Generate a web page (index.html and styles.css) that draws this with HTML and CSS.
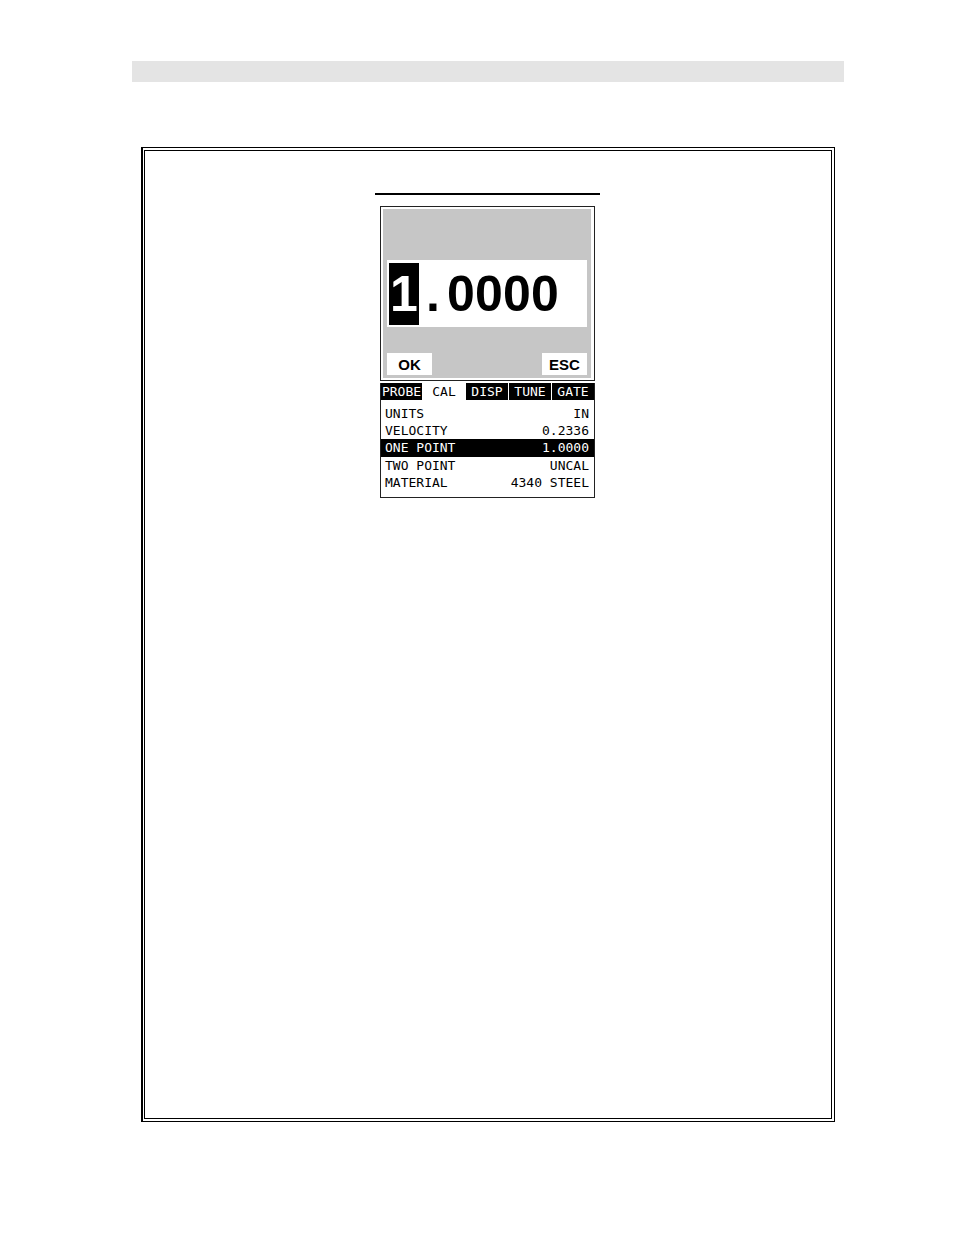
FILE: index.html
```html
<!DOCTYPE html>
<html lang="en">
<head>
  <meta charset="UTF-8" />
  <meta name="viewport" content="width=device-width, initial-scale=1.0" />
  <title>One Point Calibration</title>
  <link rel="stylesheet" href="styles.css">
</head>
<body>

  <header class="page-bar"></header>

  <main class="frame">
    <div class="frame-inner">
      <hr class="title-rule">

      <section class="device">
        <div class="editor">
          <div class="screen">
            <div class="value"><span class="digit cursor">1</span><span class="digit">.</span><span class="digit">0</span><span class="digit">0</span><span class="digit">0</span><span class="digit">0</span></div>
            <div class="actions">
              <button type="button" class="key">OK</button>
              <button type="button" class="key">ESC</button>
            </div>
          </div>
        </div>

        <div class="menu">
          <nav class="tabs">
            <button type="button" class="tab">PROBE</button>
            <button type="button" class="tab active">CAL</button>
            <button type="button" class="tab">DISP</button>
            <button type="button" class="tab divided">TUNE</button>
            <button type="button" class="tab divided">GATE</button>
          </nav>
          <table class="settings">
            <tr><th scope="row">UNITS</th><td>IN</td></tr>
            <tr><th scope="row">VELOCITY</th><td>0.2336</td></tr>
            <tr class="selected"><th scope="row">ONE POINT</th><td>1.0000</td></tr>
            <tr><th scope="row">TWO POINT</th><td>UNCAL</td></tr>
            <tr><th scope="row">MATERIAL</th><td>4340 STEEL</td></tr>
          </table>
        </div>
      </section>
    </div>
  </main>

</body>
</html>
```
FILE: styles.css
```css
:root {
  --bar: #e4e4e4;
  --screen: #c6c6c6;
  --ink: #000;
  --edge: #222;
}

* {
  box-sizing: border-box;
}

body {
  margin: 0;
  min-height: 100vh;
  display: flex;
  flex-direction: column;
  padding: 61px 110px 113px 132px;
  background: #fff;
  color: var(--ink);
  font-family: "Liberation Sans", sans-serif;
}

.page-bar {
  height: 21px;
  background: var(--bar);
}

/* Double rule, heavier on the left */
.frame {
  flex: 1;
  display: flex;
  margin: 65px 9px 0;
  padding: 2px 2px 2px 1px;
  border: 1px solid var(--ink);
  border-left-width: 2px;
}

.frame-inner {
  flex: 1;
  display: flex;
  flex-direction: column;
  align-items: center;
  padding: 42px 1px 0 0;
  border: 1px solid var(--ink);
}

.title-rule {
  width: 225px;
  height: 2px;
  margin: 0 0 11px;
  border: 0;
  background: var(--ink);
}

.device {
  width: 215px;
}

.editor {
  padding: 2px 3px 2px 2px;
  border: 1px solid var(--edge);
}

.screen {
  height: 169px;
  padding: 51px 4px 4px;
  background: var(--screen);
}

.value {
  display: flex;
  align-items: center;
  height: 67px;
  padding-left: 2px;
  background: #fff;
  font-size: 50px;
  font-weight: bold;
  line-height: 62px;
}

.digit {
  width: 28px;
  text-align: center;
}

.cursor {
  width: 30px;
  background: var(--ink);
  color: #fff;
}

.actions {
  display: flex;
  justify-content: space-between;
  margin-top: 26px;
}

.key {
  width: 45px;
  height: 22px;
  padding: 0;
  border: 0;
  background: #fff;
  color: var(--ink);
  font: bold 15px "Liberation Sans", sans-serif;
}

.menu {
  margin-top: 2px;
  padding-bottom: 6px;
  border: 1px solid var(--edge);
  border-top: 0;
  font: 13px "DejaVu Sans Mono", monospace;
}

.tabs {
  display: grid;
  grid-template-columns: 41fr 44fr 42fr 43fr 43fr;
  height: 17px;
}

.tab {
  padding: 0;
  border: 0;
  background: var(--ink);
  color: #fff;
  font: inherit;
  line-height: 17px;
}

.tab.active {
  background: #fff;
  color: var(--ink);
}

.tab.divided {
  border-left: 1px solid #fff;
}

.settings {
  width: 100%;
  margin-top: 5px;
  border-collapse: collapse;
  line-height: 17px;
}

.settings th {
  padding: 0 0 0 4px;
  font-weight: normal;
  text-align: left;
}

.settings td {
  padding: 0 5px 0 0;
  text-align: right;
}

.settings .selected {
  background: var(--ink);
  color: #fff;
  line-height: 18px;
}
```
